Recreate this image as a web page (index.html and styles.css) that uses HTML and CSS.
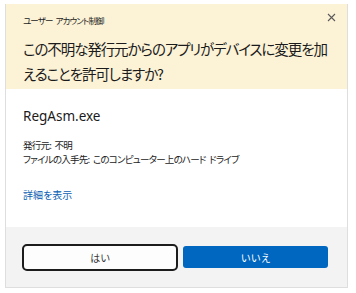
FILE: index.html
```html
<!DOCTYPE html>
<html lang="ja">
<head>
<meta charset="utf-8">
<link rel="stylesheet" href="styles.css">
</head>
<body>
<div class="dialog">
  <div class="header">
    <div class="title-row">
      <span class="title">ユーザー アカウント制御</span>
      <svg class="close" width="9" height="9" viewBox="0 0 9 9"><path d="M1 1L8 8M8 1L1 8" stroke="#5a5a5a" stroke-width="1.1" fill="none"/></svg>
    </div>
    <div class="question">この不明な発行元からのアプリがデバイスに変更を加えることを許可しますか?</div>
  </div>
  <div class="body">
    <div class="app">RegAsm.exe</div>
    <div class="info">発行元: 不明</div>
    <div class="info">ファイルの入手先: このコンピューター上のハード ドライブ</div>
    <div class="details">詳細を表示</div>
  </div>
  <div class="footer">
    <button class="btn yes">はい</button>
    <button class="btn no">いいえ</button>
  </div>
</div>
</body>
</html>
```
FILE: styles.css
```css
html, body {
  margin: 0;
  padding: 0;
  background: #ffffff;
}
body {
  font-family: "Noto Sans", "Noto Sans CJK JP", sans-serif;
  color: #1b1b1b;
  font-feature-settings: "palt";
}
.dialog {
  margin: 4px 0 0 5px;
  width: 343px;
  height: 284px;
  box-sizing: border-box;
  border: 1px solid #dedede;
  border-top: none;
  display: flex;
  flex-direction: column;
  background: #fff;
}
.header {
  background: #fcf2d6;
  height: 85px;
  box-sizing: border-box;
  padding: 9px 11px 0 17px;
  flex: none;
}
.title-row {
  display: flex;
  justify-content: space-between;
  align-items: center;
  height: 14px;
}
.title {
  font-family: "Noto Sans CJK JP", sans-serif;
  font-size: 8.5px;
  line-height: 14px;
  letter-spacing: -0.9px;
  word-spacing: 2px;
  color: #222;
}
.close {
  display: block;
  margin-top: -6px;
}
.question {
  font-family: "Noto Sans CJK JP", sans-serif;
  font-size: 14.5px;
  line-height: 25px;
  margin-top: 9px;
  color: #1b1b1b;
  letter-spacing: -1.1px;
}
.body {
  flex: 1;
  padding: 18px 17px 0 17px;
}
.app {
  font-size: 13.5px;
  line-height: 18px;
  color: #1b1b1b;
}
.info {
  font-family: "Noto Sans CJK JP", sans-serif;
  font-size: 9.5px;
  line-height: 14px;
  letter-spacing: -0.75px;
  word-spacing: 2px;
  color: #222;
}
.app + .info {
  margin-top: 13px;
}
.details {
  font-family: "Noto Sans CJK JP", sans-serif;
  font-size: 10px;
  line-height: 14px;
  color: #0a5fb4;
  margin-top: 22px;
}
.footer {
  flex: none;
  height: 60px;
  background: #f3f3f3;
  display: flex;
  align-items: center;
  gap: 5px;
  padding: 0 19px 0 16px;
  box-sizing: border-box;
}
.btn {
  font-family: "Noto Sans CJK JP", sans-serif;
  font-size: 10px;
  padding: 0;
  cursor: default;
}
.yes {
  width: 157px;
  height: 27px;
  background: #fdfdfd;
  border: 2px solid #1c1c1c;
  border-radius: 5px;
  color: #333;
}
.no {
  width: 145px;
  height: 22px;
  background: #0067c0;
  border: none;
  border-radius: 3px;
  color: #fff;
}
```
